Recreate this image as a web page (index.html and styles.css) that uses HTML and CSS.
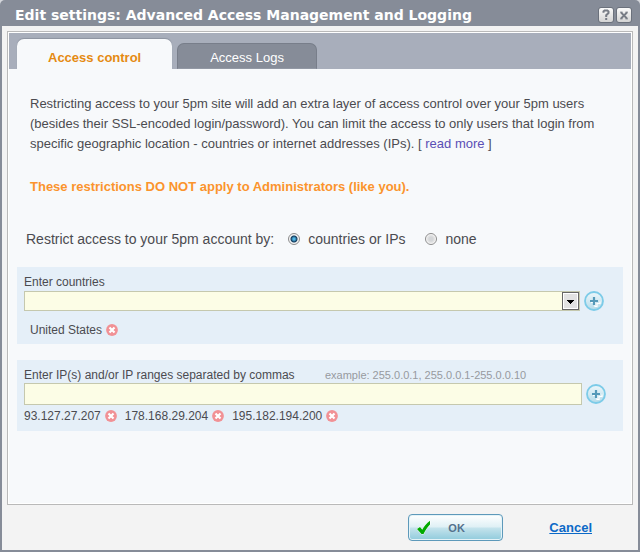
FILE: index.html
```html
<!DOCTYPE html>
<html lang="en">
	<head>
		<meta charset="UTF-8" />
		<title>Edit settings</title>
		<link rel="stylesheet" href="styles.css">
	</head>
	<body>
		<!-- shared icons -->
		<svg class="sprite" width="0" height="0" aria-hidden="true">
			<defs>
				<linearGradient id="plusFill" x1="0" y1="0" x2="0" y2="1">
					<stop offset="0" stop-color="#eef7fb" />
					<stop offset="1" stop-color="#b5dbe9" />
				</linearGradient>
			</defs>
			<symbol id="plus" viewBox="0 0 20 20">
				<circle cx="10" cy="10" r="9" fill="url(#plusFill)" stroke="#7ccbe8" stroke-width="1.8" />
				<path d="M7 11.500h4v4h2v-3h3v-2" fill="none" stroke="#fff" stroke-width="1.200" />
				<path d="M6 10h8M10 6v8" stroke="#5599b8" stroke-width="2.2" />
			</symbol>
			<symbol id="remove" viewBox="0 0 12 12">
				<circle cx="6" cy="6" r="5.9" fill="#f19195" />
				<path d="M3.5 3.5l5 5M8.5 3.5l-5 5" stroke="#fff" stroke-width="2.2" />
			</symbol>
		</svg>

		<div class="dialog">
			<header class="titlebar">
				<h1>Edit settings: Advanced Access Management and Logging</h1>
				<button type="button" class="win-btn" aria-label="Help">
					<svg width="10" height="12" viewBox="0 0 10 12"><path d="M2.5 3.8V2.5L3.6 1.4h2.8l1.1 1.1v1.6L5.2 6.2v1.7M5.2 9v2" fill="none" stroke="#777c85" stroke-width="2" /></svg>
				</button>
				<button type="button" class="win-btn" aria-label="Close">
					<svg width="10" height="12" viewBox="0 0 10 12"><path d="M2 3.5l6 6M8 3.5l-6 6" stroke="#777c85" stroke-width="1.8" /><path d="M1 3.2h2.6M6.4 3.2H9M1 9.8h2.6M6.4 9.8H9" stroke="#777c85" stroke-width="1" /></svg>
				</button>
			</header>

			<form class="body">
				<div class="panel">
					<nav class="tabs">
						<button type="button" class="tab active">Access control</button>
						<button type="button" class="tab">Access Logs</button>
					</nav>

					<div class="content">
						<p class="intro">
							Restricting access to your 5pm site will add an extra layer of access control over your 5pm users<br>
							(besides their SSL-encoded login/password). You can limit the access to only users that login from<br>
							specific geographic location - countries or internet addresses (IPs). [ <a href="#">read more</a> ]
						</p>
						<p class="warning">These restrictions DO NOT apply to Administrators (like you).</p>

						<div class="restrict" role="radiogroup" aria-labelledby="restrictLabel">
							<span id="restrictLabel">Restrict access to your 5pm account by:</span>
							<label><input type="radio" name="restrict" checked>countries or IPs</label>
							<label><input type="radio" name="restrict">none</label>
						</div>

						<section class="box countries">
							<label for="country">Enter countries</label>
							<div class="row">
								<select id="country" class="field"><option></option></select>
								<button type="button" class="icon-btn" aria-label="Add country"><svg width="20" height="20"><use href="#plus" /></svg></button>
							</div>
							<ul class="items">
								<li>United States <button type="button" class="icon-btn" aria-label="Remove United States"><svg width="12" height="12"><use href="#remove" /></svg></button></li>
							</ul>
						</section>

						<section class="box ips">
							<label for="ip">Enter IP(s) and/or IP ranges separated by commas</label>
							<span class="example">example: 255.0.0.1, 255.0.0.1-255.0.0.10</span>
							<div class="row">
								<input id="ip" class="field" type="text">
								<button type="button" class="icon-btn" aria-label="Add IP"><svg width="20" height="20"><use href="#plus" /></svg></button>
							</div>
							<ul class="items">
								<li>93.127.27.207 <button type="button" class="icon-btn" aria-label="Remove 93.127.27.207"><svg width="12" height="12"><use href="#remove" /></svg></button></li>
								<li>178.168.29.204 <button type="button" class="icon-btn" aria-label="Remove 178.168.29.204"><svg width="12" height="12"><use href="#remove" /></svg></button></li>
								<li>195.182.194.200 <button type="button" class="icon-btn" aria-label="Remove 195.182.194.200"><svg width="12" height="12"><use href="#remove" /></svg></button></li>
							</ul>
						</section>
					</div>
				</div>

				<footer class="actions">
					<button type="button" class="ok">
						<svg width="16" height="16" viewBox="0 0 16 16"><path d="M1 9l3-2 2.300 2.800C8 6.500 10.500 3.500 14 .8v3.700C11.500 7 9.500 10 7.500 14H5.500z" fill="#0a0" stroke="#fff" stroke-width="1" paint-order="stroke" /></svg>
						<span>OK</span>
					</button>
					<a class="cancel" href="#">Cancel</a>
				</footer>
			</form>
		</div>
	</body>
</html>
```
FILE: styles.css
```css
* {
	box-sizing: border-box;
}
body {
	margin: 0;
	background: #d5d7dc;
	font-family: Arial, "Liberation Sans", sans-serif;
	font-size: 12px;
	color: #4b4b50;
}
h1,
p,
ul {
	margin: 0;
	padding: 0;
}
button {
	font-family: inherit;
	cursor: pointer;
}
svg {
	display: block;
}
.sprite {
	position: absolute;
}
.dialog {
	display: flex;
	flex-direction: column;
	min-height: 100vh;
	padding: 0 2px 2px;
	background: #868c98;
	border-radius: 5px 5px 0 0;
}

/* title bar */
.titlebar {
	display: flex;
	align-items: center;
	gap: 2px;
	height: 26px;
	padding: 3px 6px 0 13px;
}
.titlebar h1 {
	flex: 1;
	font: bold 14px/16px "DejaVu Sans", Verdana, sans-serif;
	color: #fff;
}
.win-btn {
	display: flex;
	align-items: center;
	justify-content: center;
	width: 16px;
	height: 16px;
	padding: 0;
	border: 1px solid #6b717c;
	border-radius: 3px;
	background: linear-gradient(#fafafa, #d4d4d4);
}

.body {
	flex: 1;
	display: flex;
	flex-direction: column;
	padding: 5px;
	background: #f3f3f3;
}
.panel {
	flex: 1;
	border: 1px solid #b9b9b9;
	padding: 1px;
	background: #f7f9fb;
	box-shadow: inset 0 0 0 1px #fff;
}

/* tabs */
.tabs {
	display: flex;
	align-items: flex-end;
	gap: 5px;
	height: 36px;
	padding: 0 8px;
	background: #a8aebb;
}
.tab {
	height: 26px;
	padding: 3px 32px 0;
	border: 1px solid #787e8a;
	border-bottom-color: #9298a4;
	border-radius: 7px 7px 0 0;
	background: #868c98;
	font-size: 13px;
	color: #fff;
}
.tab.active {
	height: 30px;
	padding: 6px 31px 0;
	border: 0;
	background: #f7f9fb;
	box-shadow: 0 -1px 1px #8d94a1;
	font-weight: bold;
	color: #e58a12;
}

.content {
	padding: 25px 8px 0;
}
.intro,
.warning {
	padding-left: 13px;
	font-size: 13px;
	line-height: 20px;
}
.intro a {
	color: #5a4fb5;
	text-decoration: none;
}
.warning {
	margin-top: 23px;
	font-weight: bold;
	color: #fb942d;
}
.restrict {
	display: flex;
	align-items: center;
	margin: 32px 0 18px;
	padding-left: 9px;
	font-size: 14px;
	line-height: 20px;
}
.restrict label {
	display: flex;
	align-items: center;
	gap: 8px;
	margin-right: 20px;
}
.restrict span {
	margin-right: 14px;
}
input[type="radio"] {
	appearance: none;
	width: 12px;
	height: 12px;
	margin: 0;
	border: 1px solid #8b8b8b;
	border-radius: 50%;
	background: radial-gradient(circle, #d4d6d8 0 2px, #e8e8e8 4px, #fff 5px);
}
input[type="radio"]:checked {
	background: radial-gradient(circle, #4fb6e6 0 1px, #123a5c 3px, #f4f4f4 4px);
}

/* blue boxes */
.box {
	margin-bottom: 16px;
	padding: 7px 17px 6px 7px;
	background: #e5eff8;
	line-height: 16px;
}
.row {
	display: flex;
	align-items: center;
	gap: 4px;
}
.field {
	flex: 1;
	min-width: 0;
	height: 22px;
	padding: 0 4px;
	border: 1px solid #c5c8ae;
	border-radius: 0;
	background: #fcfde6;
	font: inherit;
}
select.field {
	height: 20px;
	appearance: none;
	background: #fcfde6 url("data:image/svg+xml,%3Csvg xmlns='http://www.w3.org/2000/svg' width='17' height='18'%3E%3Crect x='.5' y='.5' width='16' height='17' fill='%23e2e2e2' stroke='%23666'/%3E%3Crect x='1.5' y='1.5' width='14' height='15' fill='none' stroke='%23fff'/%3E%3Cpath d='M5 8h7v1h-1v1h-1v1h-1v1h-1v-1h-1v-1h-1v-1h-1z'/%3E%3C/svg%3E") no-repeat right center;
}
.icon-btn {
	padding: 0;
	border: 0;
	background: none;
}
.items {
	display: flex;
	gap: 8px;
	list-style: none;
}
.items li {
	display: flex;
	align-items: center;
	gap: 4px;
}
.countries .row {
	margin-top: 1px;
	padding-right: 2px;
}
.countries .items {
	padding: 11px 6px 0;
}
.ips .items {
	padding: 3px 0 1px;
}
.example {
	margin-left: 27px;
	font-size: 11px;
	color: #979a9f;
}

/* bottom buttons */
.actions {
	display: flex;
	align-items: center;
	justify-content: flex-end;
	gap: 46px;
	padding: 9px 41px 4px;
}
.ok {
	display: flex;
	align-items: center;
	width: 95px;
	height: 27px;
	padding: 0 7px;
	border: 1px solid #5d99ba;
	border-radius: 4px;
	background: linear-gradient(#fff, #dff0f5 48%, #c4e3ec 52%, #90cbdc);
	box-shadow: inset 0 0 0 1px #e4f3f8;
	font-weight: bold;
	font-size: 11px;
	color: #53708c;
}
.ok span {
	margin-left: 16px;
}
.cancel {
	font-weight: bold;
	font-size: 13px;
	color: #0b69c7;
}
```
